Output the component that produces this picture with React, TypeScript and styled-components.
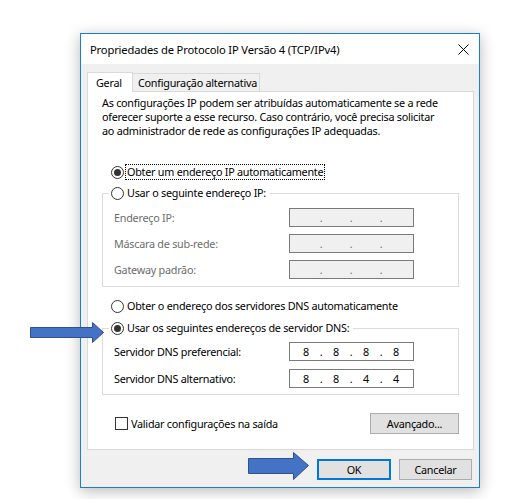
import React from "react";
import styled, { createGlobalStyle } from "styled-components";

const uiFont = `"Noto Sans", "Liberation Sans", sans-serif`;

const GlobalStyle = createGlobalStyle`
  html, body { margin: 0; background: #fff; }
  body { font-family: ${uiFont}; font-size: 10.8px; letter-spacing: -0.25px; color: #000; }
`;

const Page = styled.div`
  position: relative;
  width: 520px;
  height: 499px;
  overflow: hidden;
  padding: 33px 0 0 80px;
  box-sizing: border-box;
`;

const Dialog = styled.div`
  width: 400px;
  height: 455px;
  box-sizing: border-box;
  border: 1px solid #1a7fd4;
  background: #f0f0f0;
  box-shadow: 0 3px 14px rgba(0, 0, 0, 0.28);
  display: flex;
  flex-direction: column;
`;

const TitleBar = styled.div`
  height: 30px;
  flex: none;
  background: #fff;
  display: flex;
  align-items: center;
  justify-content: space-between;
  padding: 0 10px 0 9px;
  font-size: 11.2px;
  letter-spacing: -0.17px;
`;

const Body = styled.div`
  flex: 1;
  display: flex;
  flex-direction: column;
  padding: 8px 5px 7px 6px;
`;

const TabRow = styled.div`
  height: 19px;
  display: flex;
  align-items: flex-end;
`;

const Tab = styled.div<{ $active?: boolean }>`
  position: relative;
  z-index: ${(p) => (p.$active ? 1 : 0)};
  box-sizing: border-box;
  height: ${(p) => (p.$active ? "20px" : "18px")};
  margin-bottom: ${(p) => (p.$active ? "-1px" : "0")};
  margin-left: ${(p) => (p.$active ? "0" : "-1px")};
  width: ${(p) => (p.$active ? "46px" : "128px")};
  padding-left: ${(p) => (p.$active ? "8px" : "5px")};
  display: flex;
  align-items: center;
  background: ${(p) => (p.$active ? "#fff" : "#f0f0f0")};
  border: 1px solid #d9d9d9;
  border-bottom: none;
`;

const Panel = styled.div`
  flex: 1;
  display: flex;
  flex-direction: column;
  background: #fff;
  border: 1px solid #d9d9d9;
  padding: 4px 14px 0 14px;
`;

const Intro = styled.p`
  margin: 0;
  line-height: 14px;
  white-space: nowrap;
`;

const OptionRow = styled.div<{ $top: number }>`
  height: 16px;
  margin: ${(p) => p.$top}px 0 0 9px;
  display: flex;
  align-items: center;
  gap: 2px;
`;

const Radio = styled.span<{ $on?: boolean }>`
  width: 13px;
  height: 13px;
  flex: none;
  box-sizing: border-box;
  border-radius: 50%;
  border: 1px solid #333;
  background: #fff;
  display: grid;
  place-items: center;
  &::after {
    content: "";
    width: 7px;
    height: 7px;
    border-radius: 50%;
    background: ${(p) => (p.$on ? "#333" : "transparent")};
  }
`;

const Label = styled.span<{ $focus?: boolean }>`
  padding: 0 1px;
  line-height: 14px;
  white-space: nowrap;
  outline: ${(p) => (p.$focus ? "1px dotted #000" : "none")};
`;

const Group = styled.fieldset<{ $top: number; $pad: string }>`
  margin: ${(p) => p.$top}px 0 0 0;
  padding: ${(p) => p.$pad};
  min-width: 0;
  border: 1px solid #dcdcdc;
`;

const Legend = styled.legend`
  margin-left: 6px;
  padding: 0 3px 0 2px;
  height: 16px;
  display: flex;
  align-items: center;
  gap: 2px;
`;

const Fields = styled.div<{ $gap: number }>`
  display: grid;
  grid-template-columns: 175px 125px;
  row-gap: ${(p) => p.$gap}px;
  align-items: center;
  padding-left: 11px;
`;

const FieldLabel = styled.span<{ $disabled?: boolean }>`
  color: ${(p) => (p.$disabled ? "#6d6d6d" : "#000")};
  white-space: nowrap;
`;

const IpBox = styled.div<{ $disabled?: boolean }>`
  height: 19px;
  box-sizing: border-box;
  border: 1px solid #7a7a7a;
  background: ${(p) => (p.$disabled ? "#f0f0f0" : "#fff")};
  padding-left: 3px;
  display: grid;
  grid-template-columns: 26px 4px 26px 4px 26px 4px 26px;
  align-items: center;
  line-height: 17px;
  color: ${(p) => (p.$disabled ? "#6d6d6d" : "#000")};
  span { text-align: center; }
`;

const BottomRow = styled.div`
  margin-top: 18px;
  display: flex;
  align-items: center;
  justify-content: space-between;
  padding-left: 13px;
`;

const CheckLine = styled.div`
  display: flex;
  align-items: center;
  gap: 3px;
`;

const Checkbox = styled.span`
  width: 13px;
  height: 13px;
  box-sizing: border-box;
  border: 1px solid #333;
  background: #fff;
`;

const Button = styled.button<{ $default?: boolean; $w: number }>`
  width: ${(p) => p.$w}px;
  height: 21px;
  box-sizing: border-box;
  padding: 0;
  font: inherit;
  letter-spacing: inherit;
  color: #000;
  background: #e1e1e1;
  border: ${(p) => (p.$default ? "2px solid #0078d7" : "1px solid #adadad")};
`;

const Footer = styled.div`
  display: flex;
  justify-content: flex-end;
  gap: 8px;
  padding: 9px 2px 0 0;
`;

const Arrow = styled.svg`
  position: absolute;
  overflow: visible;
`;

const IpField = ({ value, disabled }: { value?: string[]; disabled?: boolean }) => {
  const parts = value || ["", "", "", ""];
  return (
    <IpBox $disabled={disabled}>
      {parts.map((p, i) => (
        <React.Fragment key={i}>
          {i > 0 && <span>.</span>}
          <span>{p}</span>
        </React.Fragment>
      ))}
    </IpBox>
  );
};

export default function App() {
  return (
    <Page>
      <GlobalStyle />
      <Dialog>
        <TitleBar>
          <span>Propriedades de Protocolo IP Versão 4 (TCP/IPv4)</span>
          <svg width="11" height="11" viewBox="0 0 11 11">
            <path d="M0.5 0.5 L10.5 10.5 M10.5 0.5 L0.5 10.5" stroke="#000" strokeWidth="1" />
          </svg>
        </TitleBar>
        <Body>
          <TabRow>
            <Tab $active>Geral</Tab>
            <Tab>Configuração alternativa</Tab>
          </TabRow>
          <Panel>
            <Intro>
              As configurações IP podem ser atribuídas automaticamente se a rede
              <br />
              oferecer suporte a esse recurso. Caso contrário, você precisa solicitar
              <br />
              ao administrador de rede as configurações IP adequadas.
            </Intro>

            <OptionRow $top={26}>
              <Radio $on />
              <Label $focus>Obter um endereço IP automaticamente</Label>
            </OptionRow>

            <Group $top={5} $pad="7px 0 7px 0">
              <Legend>
                <Radio />
                <Label>Usar o seguinte endereço IP:</Label>
              </Legend>
              <Fields $gap={7}>
                <FieldLabel $disabled>Endereço IP:</FieldLabel>
                <IpField disabled />
                <FieldLabel $disabled>Máscara de sub-rede:</FieldLabel>
                <IpField disabled />
                <FieldLabel $disabled>Gateway padrão:</FieldLabel>
                <IpField disabled />
              </Fields>
            </Group>

            <OptionRow $top={11}>
              <Radio />
              <Label>Obter o endereço dos servidores DNS automaticamente</Label>
            </OptionRow>

            <Group $top={6} $pad="6px 0 6px 0">
              <Legend>
                <Radio $on />
                <Label>Usar os seguintes endereços de servidor DNS:</Label>
              </Legend>
              <Fields $gap={8}>
                <FieldLabel>Servidor DNS preferencial:</FieldLabel>
                <IpField value={["8", "8", "8", "8"]} />
                <FieldLabel>Servidor DNS alternativo:</FieldLabel>
                <IpField value={["8", "8", "4", "4"]} />
              </Fields>
            </Group>

            <BottomRow>
              <CheckLine>
                <Checkbox />
                <span>Validar configurações na saída</span>
              </CheckLine>
              <Button $w={89}>Avançado...</Button>
            </BottomRow>
          </Panel>
          <Footer>
            <Button $default $w={74}>OK</Button>
            <Button $w={73}>Cancelar</Button>
          </Footer>
        </Body>
      </Dialog>

      <Arrow style={{ left: 0, top: 0 }} width="1" height="1">
        <polygon
          points="30.5,327.5 92.5,327.5 92.5,322.5 103.5,332.5 92.5,342.5 92.5,337.5 30.5,337.5"
          fill="#4472c4"
          stroke="#2f528f"
          strokeWidth="1"
        />
        <polygon
          points="248.5,458.5 293.5,458.5 293.5,452.5 308.5,465.5 293.5,479.5 293.5,473.5 248.5,473.5"
          fill="#4472c4"
          stroke="#2f528f"
          strokeWidth="1"
        />
      </Arrow>
    </Page>
  );
}
